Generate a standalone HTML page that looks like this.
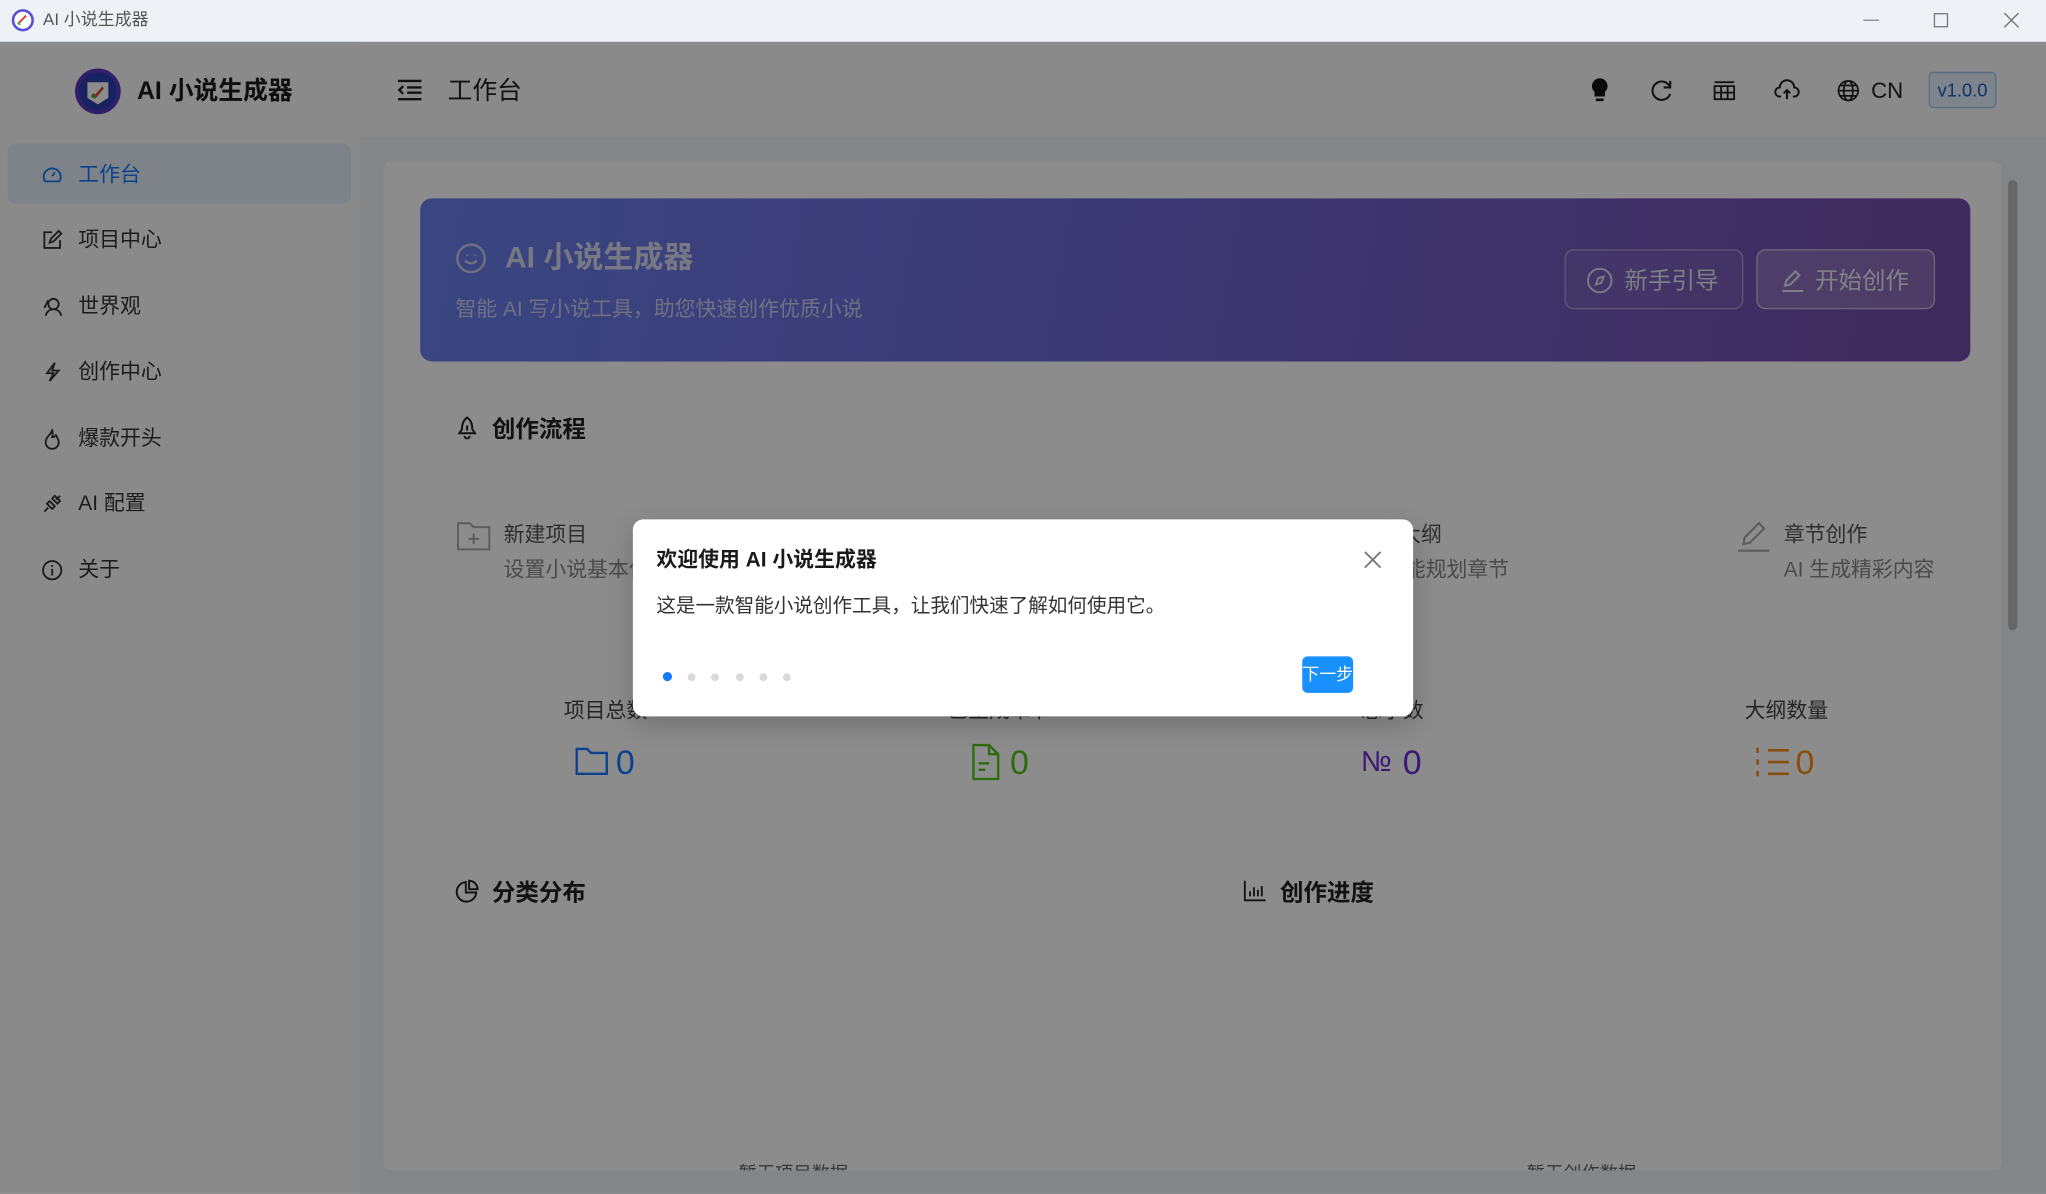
<!DOCTYPE html>
<html><head><meta charset="utf-8">
<style>
*{margin:0;padding:0;box-sizing:border-box}
html,body{width:2046px;height:1194px;overflow:hidden;background:#fff}
body{font-family:"Liberation Sans","Noto Sans CJK SC",sans-serif}
#w{position:absolute;left:0;top:0;width:1568px;height:915px;transform:scale(1.30485);transform-origin:0 0;overflow:hidden}
.a{position:absolute}
.t{position:absolute;white-space:nowrap;line-height:1}
svg{position:absolute;overflow:visible}
</style></head><body><div id="w">
<div class="a" style="left:0;top:0;width:1568px;height:32px;background:#eef2f7"></div>
<svg style="left:9px;top:7px" width="17" height="17" viewBox="0 0 17 17"><circle cx="8.5" cy="8.5" r="7.5" fill="#fff" stroke="#5b4fd8" stroke-width="2"/><path d="M5 11l2-2 4-4" stroke="#e0433b" stroke-width="1.6" fill="none"/><path d="M4.5 10.5l2 1.5" stroke="#3db83d" stroke-width="1.6"/></svg>
<div class="t" style="left:33px;top:8px;font-size:13px;color:#555">AI 小说生成器</div>
<div class="a" style="left:1428px;top:15px;width:12px;height:1px;background:#888"></div>
<div class="a" style="left:1482px;top:10px;width:11px;height:11px;border:1px solid #777"></div>
<svg style="left:1535px;top:9px" width="12" height="12"><path d="M1 1l11 11M12 1L1 12" stroke="#777" stroke-width="1.1"/></svg>

<div class="a" style="left:0;top:32px;width:1568px;height:883px;background:#f0f2f5"></div>
<div class="a" style="left:0;top:32px;width:276px;height:883px;background:#fbfbfc"></div>
<div class="a" style="left:276px;top:32px;width:1292px;height:74px;background:#fcfcfc;border-bottom:1px solid #e6e6e6"></div>
<svg style="left:57px;top:52px" width="36" height="36" viewBox="0 0 36 36"><circle cx="18" cy="18" r="16" fill="#2f3fb0"/><circle cx="18" cy="18" r="16" fill="none" stroke="#5a3ac0" stroke-width="3"/><path d="M10 11h16v12l-8 5-8-5z" fill="#fff"/><path d="M14 20l2 2 6-7" stroke="#e0433b" stroke-width="2" fill="none"/><path d="M13 21l3 2" stroke="#3db83d" stroke-width="2"/></svg>
<div class="t" style="left:105px;top:61px;font-size:19px;font-weight:bold;color:#1a1a1a">AI 小说生成器</div>
<div class="a" style="left:6px;top:110px;width:263px;height:46px;background:#e4eef9;border-radius:6px"></div>
<svg style="left:32px;top:126px" width="16" height="16" viewBox="0 0 16 16" fill="none" stroke="#1677ff" stroke-width="1.4"><path d="M2.5 13A6.5 6.5 0 1 1 13.5 13z"/><path d="M8 9l2-3"/></svg>
<div class="t" style="left:60px;top:127px;font-size:16px;color:#1677ff">工作台</div>
<svg style="left:32px;top:176px" width="16" height="16" viewBox="0 0 16 16" fill="none" stroke="#333" stroke-width="1.4"><path d="M8 2H2v12h12V8"/><path d="M6 10l1-3 6-6 2 2-6 6z"/></svg>
<div class="t" style="left:60px;top:177px;font-size:16px;color:#333">项目中心</div>
<svg style="left:32px;top:227px" width="16" height="16" viewBox="0 0 16 16" fill="none" stroke="#333" stroke-width="1.4"><circle cx="9" cy="6" r="4"/><path d="M3 15c1-4 4-5 6-5s5 1 6 5M5 3L2 9"/></svg>
<div class="t" style="left:60px;top:228px;font-size:16px;color:#333">世界观</div>
<svg style="left:32px;top:277px" width="16" height="16" viewBox="0 0 16 16" fill="none" stroke="#333" stroke-width="1.4"><path d="M10 1L4 9h5l-3 6 7-8H8z"/></svg>
<div class="t" style="left:60px;top:278px;font-size:16px;color:#333">创作中心</div>
<svg style="left:32px;top:328px" width="16" height="16" viewBox="0 0 16 16" fill="none" stroke="#333" stroke-width="1.4"><path d="M8 1c0 4-5 5-5 10a5 5 0 0 0 10 0c0-3-2-4-2-6-1 2-2 2-3 2 1-2 0-4 0-6z"/></svg>
<div class="t" style="left:60px;top:329px;font-size:16px;color:#333">爆款开头</div>
<svg style="left:32px;top:378px" width="16" height="16" viewBox="0 0 16 16" fill="none" stroke="#333" stroke-width="1.4"><path d="M2 14l3-3M14 2l-3 3M4 8l4 4 2-2-4-4zM8 4l4 4 2-2-4-4z"/></svg>
<div class="t" style="left:60px;top:379px;font-size:16px;color:#333">AI 配置</div>
<svg style="left:32px;top:429px" width="16" height="16" viewBox="0 0 16 16" fill="none" stroke="#333" stroke-width="1.4"><circle cx="8" cy="8" r="7"/><path d="M8 7v5M8 4v1.5"/></svg>
<div class="t" style="left:60px;top:430px;font-size:16px;color:#333">关于</div>

<svg style="left:304px;top:61px" width="19" height="16" viewBox="0 0 19 16" fill="none" stroke="#222" stroke-width="1.8"><path d="M1 1h18M8 6h11M8 10h11M1 15h18M5 5l-3 3 3 3"/></svg>
<div class="t" style="left:343px;top:61px;font-size:19px;color:#222">工作台</div>
<svg style="left:1218px;top:60px" width="16" height="19" viewBox="0 0 16 19"><path d="M8 0a6 6 0 0 0-4 10.5V14h8v-3.5A6 6 0 0 0 8 0z" fill="#111"/><rect x="5" y="15.5" width="6" height="2" fill="#111"/></svg>
<svg style="left:1265px;top:61px" width="17" height="17" viewBox="0 0 17 17" fill="none" stroke="#222" stroke-width="1.6"><path d="M15 6A7 7 0 1 0 15 11M15 1v5h-5"/></svg>
<svg style="left:1313px;top:62px" width="17" height="15" viewBox="0 0 17 15" fill="none" stroke="#222" stroke-width="1.4"><path d="M1 1h15M1 4h15v10H1zM1 9h15M6 4v10M11 4v10"/></svg>
<svg style="left:1360px;top:62px" width="19" height="15" viewBox="0 0 19 15" fill="none" stroke="#222" stroke-width="1.5"><path d="M5 12H4a3.5 3.5 0 0 1 0-7A5.5 5.5 0 0 1 15 5a3.5 3.5 0 0 1 0 7h-1M9.5 14V7M7 9.5l2.5-2.5 2.5 2.5"/></svg>
<svg style="left:1408px;top:61px" width="17" height="17" viewBox="0 0 17 17" fill="none" stroke="#222" stroke-width="1.3"><circle cx="8.5" cy="8.5" r="7.5"/><ellipse cx="8.5" cy="8.5" rx="3.5" ry="7.5"/><path d="M1 8.5h15M2 4.5h13M2 12.5h13"/></svg>
<div class="t" style="left:1434px;top:61px;font-size:17px;color:#222">CN</div>
<div class="a" style="left:1478px;top:55px;width:52px;height:28px;border:1px solid #9ec6f0;background:#e3f0ff;border-radius:4px;color:#1e5bbf;font-size:14px;text-align:center;line-height:26px">v1.0.0</div>

<div class="a" style="left:294px;top:124px;width:1240px;height:773px;background:#fff;border-radius:6px;overflow:hidden">
<div class="t" style="left:272px;top:768px;font-size:14px;color:#666">暂无项目数据</div>
<div class="t" style="left:876px;top:768px;font-size:14px;color:#666">暂无创作数据</div>
</div>
<div class="a" style="left:1539px;top:138px;width:7px;height:345px;background:#bbb;border-radius:4px"></div>
<div class="a" style="left:322px;top:152px;width:1188px;height:125px;border-radius:9px;background:linear-gradient(100deg,#6a80ec,#6f6ad8 40%,#744ea8)"></div>
<svg style="left:349px;top:186px" width="24" height="24" viewBox="0 0 24 24" fill="none" stroke="#c9cbe8" stroke-width="1.8"><circle cx="12" cy="12" r="10.5"/><path d="M7.5 13.5c2 3 7 3 9 0M9 9v1M15 9v1"/></svg>
<div class="t" style="left:387px;top:186px;font-size:23px;font-weight:bold;color:#d8daf0">AI 小说生成器</div>
<div class="t" style="left:349px;top:230px;font-size:16px;color:#c9cdef">智能 AI 写小说工具，助您快速创作优质小说</div>
<div class="a" style="left:1199px;top:191px;width:137px;height:46px;border:1px solid rgba(255,255,255,.4);border-radius:7px;background:rgba(255,255,255,.06)"></div>
<svg style="left:1216px;top:205px" width="20" height="20" viewBox="0 0 20 20" fill="none" stroke="#e0e0f0" stroke-width="1.5"><circle cx="10" cy="10" r="9"/><path d="M13 7l-2 5-4 1 2-5z"/></svg>
<div class="t" style="left:1245px;top:206px;font-size:18px;color:#e6e6f2">新手引导</div>
<div class="a" style="left:1346px;top:191px;width:137px;height:46px;border:1px solid rgba(255,255,255,.55);border-radius:7px;background:rgba(255,255,255,.18)"></div>
<svg style="left:1364px;top:205px" width="20" height="20" viewBox="0 0 20 20" fill="none" stroke="#e6e6f2" stroke-width="1.6"><path d="M2 18h16M4 14l1-4 7-7 3 3-7 7z"/></svg>
<div class="t" style="left:1391px;top:206px;font-size:18px;color:#ececf6">开始创作</div>

<svg style="left:349px;top:319px" width="18" height="19" viewBox="0 0 18 19" fill="none" stroke="#222" stroke-width="1.5"><path d="M9 1c-3 2-4 5-4 9l-2 3h12l-2-3c0-4-1-7-4-9zM7 15a2 2 0 0 0 4 0M9 7v4"/></svg>
<div class="t" style="left:377px;top:320px;font-size:18px;font-weight:bold;color:#222">创作流程</div>
<svg style="left:350px;top:400px" width="26" height="22" viewBox="0 0 26 22" fill="none" stroke="#aaa" stroke-width="1.5"><path d="M1 1h9l3 3h12v17H1zM13 9v8M9 13h8"/></svg>
<div class="t" style="left:386px;top:403px;font-size:16px;color:#555">新建项目</div>
<div class="t" style="left:386px;top:430px;font-size:16px;color:#888">设置小说基本信息</div>
<div class="t" style="left:1041px;top:403px;font-size:16px;color:#555">生成大纲</div>
<div class="t" style="left:1041px;top:430px;font-size:16px;color:#888">AI 智能规划章节</div>
<svg style="left:1331px;top:398px" width="26" height="26" viewBox="0 0 26 26" fill="none" stroke="#aaa" stroke-width="1.6"><path d="M1 24h24M5 19l1-5 11-11 4 4-11 11z"/></svg>
<div class="t" style="left:1367px;top:403px;font-size:16px;color:#555">章节创作</div>
<div class="t" style="left:1367px;top:430px;font-size:16px;color:#888">AI 生成精彩内容</div>

<div class="t" style="left:432px;top:538px;font-size:16px;color:#444">项目总数</div>
<div class="t" style="left:726px;top:538px;font-size:16px;color:#444">已生成章节</div>
<div class="t" style="left:1043px;top:538px;font-size:16px;color:#444">总字数</div>
<div class="t" style="left:1337px;top:538px;font-size:16px;color:#444">大纲数量</div>
<svg style="left:441px;top:573px" width="25" height="21" viewBox="0 0 25 21" fill="none" stroke="#1677ff" stroke-width="1.8"><path d="M1 1h8l3 3h12v16H1z"/></svg>
<div class="t" style="left:472px;top:571px;font-size:26px;color:#1677ff">0</div>
<svg style="left:745px;top:570px" width="21" height="28" viewBox="0 0 21 28" fill="none" stroke="#52c41a" stroke-width="1.8"><path d="M1 1h12l7 7v19H1zM13 1v7h7M5 15h8M5 20h5"/></svg>
<div class="t" style="left:774px;top:571px;font-size:26px;color:#52c41a">0</div>
<div class="t" style="left:1043px;top:573px;font-size:22px;color:#6a2fd8">№</div>
<div class="t" style="left:1075px;top:571px;font-size:26px;color:#6a2fd8">0</div>
<svg style="left:1345px;top:572px" width="27" height="24" viewBox="0 0 27 24" fill="none" stroke="#fa8c16" stroke-width="2"><path d="M10 3h16M10 12h16M10 21h16M2 1v4M2 10v4M2 19v4"/></svg>
<div class="t" style="left:1376px;top:571px;font-size:26px;color:#fa8c16">0</div>

<svg style="left:349px;top:674px" width="18" height="18" viewBox="0 0 18 18" fill="none" stroke="#222" stroke-width="1.5"><path d="M8 2a7.5 7.5 0 1 0 8 8H8zM10.5 1v6.5H17A6.5 6.5 0 0 0 10.5 1z"/></svg>
<div class="t" style="left:377px;top:675px;font-size:18px;font-weight:bold;color:#222">分类分布</div>
<svg style="left:953px;top:675px" width="17" height="16" viewBox="0 0 17 16" fill="none" stroke="#222" stroke-width="1.4"><path d="M1 0v15h16M5 12V8M8 12V5M11 12V7M14 12V4"/></svg>
<div class="t" style="left:981px;top:675px;font-size:18px;font-weight:bold;color:#222">创作进度</div>

<div class="a" style="left:0;top:32px;width:1568px;height:883px;background:rgba(0,0,0,.45)"></div>

<div class="a" style="left:485px;top:398px;width:598px;height:151px;background:#fff;border-radius:8px;box-shadow:0 6px 20px rgba(0,0,0,.2)"></div>
<div class="t" style="left:503px;top:422px;font-size:16px;font-weight:bold;color:#1a1a1a">欢迎使用 AI 小说生成器</div>
<svg style="left:1045px;top:422px" width="13" height="13"><path d="M1 1l12 12M13 1L1 13" stroke="#777" stroke-width="1.4"/></svg>
<div class="t" style="left:503px;top:457px;font-size:15px;color:#333">这是一款智能小说创作工具，让我们快速了解如何使用它。</div>
<div class="a" style="left:508px;top:515px;width:7px;height:7px;border-radius:50%;background:#1677ff"></div>
<div class="a" style="left:527px;top:516px;width:6px;height:6px;border-radius:50%;background:#d9d9d9"></div>
<div class="a" style="left:545px;top:516px;width:6px;height:6px;border-radius:50%;background:#d9d9d9"></div>
<div class="a" style="left:564px;top:516px;width:6px;height:6px;border-radius:50%;background:#d9d9d9"></div>
<div class="a" style="left:582px;top:516px;width:6px;height:6px;border-radius:50%;background:#d9d9d9"></div>
<div class="a" style="left:600px;top:516px;width:6px;height:6px;border-radius:50%;background:#d9d9d9"></div>
<div class="a" style="left:998px;top:503px;width:39px;height:28px;background:#1890ff;border-radius:4px;color:#fff;font-size:13px;white-space:nowrap;text-align:center;line-height:28px">下一步</div>
</div></body></html>
